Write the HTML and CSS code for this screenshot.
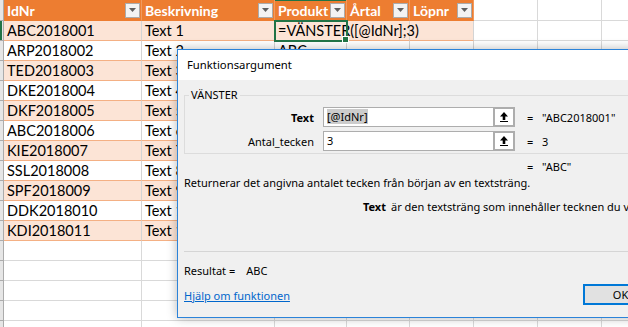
FILE: index.html
```html
<!DOCTYPE html>
<html lang="sv">
<head>
  <meta charset="UTF-8" />
  <title>Funktionsargument</title>
  <link rel="stylesheet" href="styles.css">
</head>
<body>
  <div class="sheet">
    <div class="row head">
      <div class="stub"></div>
      <div class="cell th">IdNr<span class="dd"><svg width="7" height="4" viewBox="0 0 7 4"><polygon points="0,0 7,0 3.5,4" /></svg></span></div>
      <div class="cell th">Beskrivning<span class="dd"><svg width="7" height="4" viewBox="0 0 7 4"><polygon points="0,0 7,0 3.5,4" /></svg></span></div>
      <div class="cell th col-active">Produkt<span class="dd"><svg width="7" height="4" viewBox="0 0 7 4"><polygon points="0,0 7,0 3.5,4" /></svg></span></div>
      <div class="cell th">Årtal<span class="dd"><svg width="7" height="4" viewBox="0 0 7 4"><polygon points="0,0 7,0 3.5,4" /></svg></span></div>
      <div class="cell th">Löpnr<span class="dd"><svg width="7" height="4" viewBox="0 0 7 4"><polygon points="0,0 7,0 3.5,4" /></svg></span></div>
      <div class="cell"></div><div class="cell"></div><div class="cell"></div>
    </div>

    <div class="row band">
      <div class="stub row-active"></div>
      <div class="cell td">ABC2018001</div>
      <div class="cell td">Text 1</div>
      <div class="cell td active">=VÄNSTER([@IdNr];3)</div>
      <div class="cell td"></div>
      <div class="cell td"></div>
      <div class="cell"></div><div class="cell"></div><div class="cell"></div>
    </div>
    <div class="row">
      <div class="stub"></div>
      <div class="cell td">ARP2018002</div><div class="cell td">Text 2</div><div class="cell td">ABC</div><div class="cell td"></div><div class="cell td"></div>
      <div class="cell"></div><div class="cell"></div><div class="cell"></div>
    </div>
    <div class="row band">
      <div class="stub"></div>
      <div class="cell td">TED2018003</div><div class="cell td">Text 3</div><div class="cell td">TED</div><div class="cell td"></div><div class="cell td"></div>
      <div class="cell"></div><div class="cell"></div><div class="cell"></div>
    </div>
    <div class="row">
      <div class="stub"></div>
      <div class="cell td">DKE2018004</div><div class="cell td">Text 4</div><div class="cell td">DKE</div><div class="cell td"></div><div class="cell td"></div>
      <div class="cell"></div><div class="cell"></div><div class="cell"></div>
    </div>
    <div class="row band">
      <div class="stub"></div>
      <div class="cell td">DKF2018005</div><div class="cell td">Text 5</div><div class="cell td">DKF</div><div class="cell td"></div><div class="cell td"></div>
      <div class="cell"></div><div class="cell"></div><div class="cell"></div>
    </div>
    <div class="row">
      <div class="stub"></div>
      <div class="cell td">ABC2018006</div><div class="cell td">Text 6</div><div class="cell td">ABC</div><div class="cell td"></div><div class="cell td"></div>
      <div class="cell"></div><div class="cell"></div><div class="cell"></div>
    </div>
    <div class="row band">
      <div class="stub"></div>
      <div class="cell td">KIE2018007</div><div class="cell td">Text 7</div><div class="cell td">KIE</div><div class="cell td"></div><div class="cell td"></div>
      <div class="cell"></div><div class="cell"></div><div class="cell"></div>
    </div>
    <div class="row">
      <div class="stub"></div>
      <div class="cell td">SSL2018008</div><div class="cell td">Text 8</div><div class="cell td">SSL</div><div class="cell td"></div><div class="cell td"></div>
      <div class="cell"></div><div class="cell"></div><div class="cell"></div>
    </div>
    <div class="row band">
      <div class="stub"></div>
      <div class="cell td">SPF2018009</div><div class="cell td">Text 9</div><div class="cell td">SPF</div><div class="cell td"></div><div class="cell td"></div>
      <div class="cell"></div><div class="cell"></div><div class="cell"></div>
    </div>
    <div class="row">
      <div class="stub"></div>
      <div class="cell td">DDK2018010</div><div class="cell td">Text 10</div><div class="cell td">DDK</div><div class="cell td"></div><div class="cell td"></div>
      <div class="cell"></div><div class="cell"></div><div class="cell"></div>
    </div>
    <div class="row band">
      <div class="stub"></div>
      <div class="cell td">KDI2018011</div><div class="cell td">Text 11</div><div class="cell td">KDI</div><div class="cell td"></div><div class="cell td"></div>
      <div class="cell"></div><div class="cell"></div><div class="cell"></div>
    </div>
    <div class="row">
      <div class="stub"></div>
      <div class="cell"></div><div class="cell"></div><div class="cell"></div><div class="cell"></div><div class="cell"></div><div class="cell"></div><div class="cell"></div><div class="cell"></div>
    </div>
    <div class="row">
      <div class="stub"></div>
      <div class="cell"></div><div class="cell"></div><div class="cell"></div><div class="cell"></div><div class="cell"></div><div class="cell"></div><div class="cell"></div><div class="cell"></div>
    </div>
    <div class="row">
      <div class="stub"></div>
      <div class="cell"></div><div class="cell"></div><div class="cell"></div><div class="cell"></div><div class="cell"></div><div class="cell"></div><div class="cell"></div><div class="cell"></div>
    </div>
    <div class="row">
      <div class="stub"></div>
      <div class="cell"></div><div class="cell"></div><div class="cell"></div><div class="cell"></div><div class="cell"></div><div class="cell"></div><div class="cell"></div><div class="cell"></div>
    </div>
    <div class="row">
      <div class="stub"></div>
      <div class="cell"></div><div class="cell"></div><div class="cell"></div><div class="cell"></div><div class="cell"></div><div class="cell"></div><div class="cell"></div><div class="cell"></div>
    </div>
  </div>

  <!-- function arguments dialog, floating over the sheet -->
  <div class="dialog">
    <div class="titlebar">Funktionsargument</div>
    <div class="dlg-body">
      <fieldset class="group">
        <legend>VÄNSTER</legend>
        <div class="arg">
          <span class="arg-name bold">Text</span>
          <div class="ref-input">
            <span class="ref-val"><span class="sel">[@IdNr]</span></span>
            <span class="ref-btn"><svg width="10" height="10" viewBox="0 0 10 10"><path d="M5 0 L9 4.5 L6.3 4.5 L6.3 8 L3.7 8 L3.7 4.5 L1 4.5 Z" /><rect x="1" y="9" width="8" height="1" /></svg></span>
          </div>
          <span class="eq">=</span>
          <span class="arg-val">"ABC2018001"</span>
        </div>
        <div class="arg">
          <span class="arg-name">Antal_tecken</span>
          <div class="ref-input">
            <span class="ref-val">3</span>
            <span class="ref-btn"><svg width="10" height="10" viewBox="0 0 10 10"><path d="M5 0 L9 4.5 L6.3 4.5 L6.3 8 L3.7 8 L3.7 4.5 L1 4.5 Z" /><rect x="1" y="9" width="8" height="1" /></svg></span>
          </div>
          <span class="eq">=</span>
          <span class="arg-val">3</span>
        </div>
      </fieldset>

      <div class="formula-result"><span class="eq">=</span><span>"ABC"</span></div>
      <div class="desc">Returnerar det angivna antalet tecken från början av en textsträng.</div>
      <div class="arg-desc"><span class="bold">Text</span><span>är den textsträng som innehåller tecknen du vill extrahera.</span></div>

      <div class="divider"></div>

      <div class="result">Resultat =<span class="result-val">ABC</span></div>
      <div class="footer">
        <div class="help-wrap"><a href="javascript:void(0)" class="help">Hjälp om funktionen</a></div>
        <div class="btn-ok">OK</div>
      </div>
    </div>
  </div>
</body>
</html>
```

FILE: styles.css
```css
:root {
  --orange: #ED7D31;
  --band: #FCE4D6;
  --band-line: #F4B084;
  --grid: #D9D9D9;
  --green: #217346;
  --dlg-bg: #F0F0F0;
  --dlg-font: "Noto Sans", "Open Sans", sans-serif;
  --cell-font: "Lato", "Liberation Sans", sans-serif;
}

* {
  box-sizing: border-box;
}

body {
  margin: 0;
  width: 628px;
  height: 327px;
  overflow: hidden;
  position: relative;
  background: #fff;
}

/* ---- spreadsheet ---- */

.sheet {
  font-family: var(--cell-font);
  font-size: 14.5px;
  color: #000;
}

.row {
  display: grid;
  grid-template-columns: 4px 138px 133px 72px 63px 64px 64px 64px 64px;
  height: 20px;
}

.row.head {
  height: 21px;
}

.stub {
  background: #E6E6E6;
  border-right: 1px solid #ABABAB;
  border-bottom: 1px solid #ABABAB;
}

.stub.row-active {
  box-shadow: inset 2px 0 0 var(--green);
}

.cell {
  border-right: 1px solid var(--grid);
  border-bottom: 1px solid var(--grid);
  padding: 0 3px;
  white-space: nowrap;
  line-height: 19px;
}

.th {
  background: var(--orange);
  color: #fff;
  font-weight: 700;
  font-size: 14px;
  border-right-color: #F19A5E;
  border-bottom-color: var(--orange);
  display: flex;
  justify-content: space-between;
  align-items: center;
  padding-right: 1px;
}

.th.col-active {
  box-shadow: inset 0 1px 0 var(--green);
}

.dd {
  width: 15px;
  height: 15px;
  flex: none;
  background: #F3F3F3;
  border: 1px solid #ABABAB;
  display: flex;
  align-items: center;
  justify-content: center;
}

.dd svg {
  fill: #5F5F5F;
}

.td {
  border-bottom-color: var(--band-line);
  border-right-color: #D4D4D4;
}

.band .td {
  background: var(--band);
}

.active {
  position: relative;
  z-index: 1;
  outline: 2px solid var(--green);
  outline-offset: -1px;
}

.active::after {
  content: "";
  position: absolute;
  right: -3px;
  bottom: -3px;
  width: 5px;
  height: 5px;
  background: var(--green);
  border: 1px solid #fff;
}

/* ---- dialog ---- */

.dialog {
  position: absolute;
  left: 177px;
  top: 49px;
  width: 520px;
  height: 269px;
  border: 1px solid #2B83D9;
  background: var(--dlg-bg);
  box-shadow: 0 0 10px rgba(0, 0, 0, 0.28);
  font-family: var(--dlg-font);
  font-size: 11px;
  color: #000;
  display: flex;
  flex-direction: column;
}

.titlebar {
  background: #fff;
  height: 30px;
  padding-left: 9px;
  line-height: 30px;
  font-size: 11.3px;
}

.dlg-body {
  flex: 1;
  padding: 0 0 0 6px;
  display: flex;
  flex-direction: column;
}

.group {
  margin: 7px 0 0;
  padding: 4px 0 2px;
  border: 1px solid #DCDCDC;
  border-right: none;
}

.group legend {
  padding: 0 2px;
  margin-left: 4px;
  line-height: 16px;
}

.arg {
  display: grid;
  grid-template-columns: 138px 204px 15px auto;
  align-items: center;
  height: 20px;
  margin-bottom: 4px;
}

.arg:last-child {
  margin-bottom: 0;
}

.arg-name {
  text-align: right;
  padding-right: 9px;
}

.bold {
  font-weight: 700;
}

.ref-input {
  height: 20px;
  width: 192px;
  background: #fff;
  border: 1px solid #ADADAD;
  display: flex;
  align-items: stretch;
}

.ref-val {
  flex: 1;
  padding-left: 3px;
  line-height: 18px;
}

.sel {
  background: #CCCCCC;
}

.ref-btn {
  width: 22px;
  border: 2px solid #ADADAD;
  margin: -1px -1px -1px 0;
  background: #fff;
  display: flex;
  align-items: center;
  justify-content: center;
}

.ref-btn svg {
  fill: #000;
}

.formula-result {
  margin-top: 5px;
  line-height: 16px;
  padding-left: 343px;
  display: flex;
  gap: 3px;
}

.formula-result .eq {
  width: 12px;
}

.desc {
  line-height: 16px;
}

.arg-desc {
  margin-top: 8px;
  line-height: 16px;
  display: grid;
  grid-template-columns: 202px auto;
  column-gap: 5px;
  white-space: nowrap;
}

.arg-desc .bold {
  text-align: right;
}

.divider {
  margin-top: 36px;
  height: 1px;
  background: #D5D5D5;
}

.result {
  margin-top: 11px;
  line-height: 16px;
}

.result-val {
  margin-left: 11px;
}

.footer {
  margin-top: 5px;
  display: flex;
  align-items: flex-start;
}

.help-wrap {
  flex: 0 0 399px;
  padding-top: 4px;
  line-height: 16px;
}

.help {
  color: #0066CC;
  text-decoration: underline;
}

.btn-ok {
  flex: 0 0 75px;
  height: 21px;
  background: #E1E1E1;
  border: 2px solid #0078D7;
  line-height: 17px;
  text-align: center;
}
```
